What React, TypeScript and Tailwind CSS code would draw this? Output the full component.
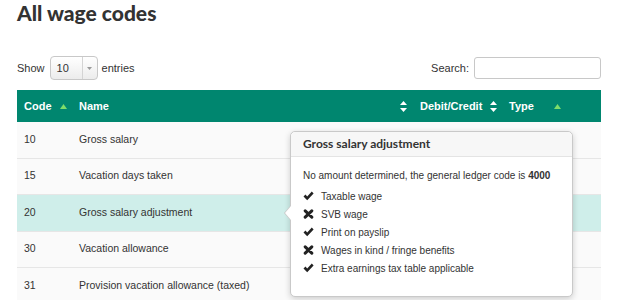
import React from "react";

type Row = { code: string; name: string; active?: boolean };

const rows: Row[] = [
  { code: "10", name: "Gross salary" },
  { code: "15", name: "Vacation days taken" },
  { code: "20", name: "Gross salary adjustment", active: true },
  { code: "30", name: "Vacation allowance" },
  { code: "31", name: "Provision vacation allowance (taxed)" },
];

const props: { ok: boolean; label: string }[] = [
  { ok: true, label: "Taxable wage" },
  { ok: false, label: "SVB wage" },
  { ok: true, label: "Print on payslip" },
  { ok: false, label: "Wages in kind / fringe benefits" },
  { ok: true, label: "Extra earnings tax table applicable" },
];

function SortBoth() {
  return (
    <svg width="7" height="11" viewBox="0 0 7 11" className="shrink-0">
      <path d="M3.5 0 L7 4 L0 4 Z" fill="#ffffff" />
      <path d="M3.5 11 L7 7 L0 7 Z" fill="#ffffff" />
    </svg>
  );
}

function SortUp() {
  return (
    <svg width="7" height="5" viewBox="0 0 7 5" className="shrink-0">
      <path d="M3.5 0 L7 5 L0 5 Z" fill="#7ddc6a" />
    </svg>
  );
}

function Check() {
  return (
    <svg width="11" height="10" viewBox="0 0 11 10">
      <path d="M0.5 5.5 L2.5 3.6 L4.2 5.6 L8.8 0.6 L10.6 2.4 L4.2 9.2 Z" fill="#222" />
    </svg>
  );
}

function Cross() {
  return (
    <svg width="11" height="10" viewBox="0 0 11 10">
      <path d="M2.2 1.8 L8.8 8.2 M8.8 1.8 L2.2 8.2" stroke="#222" strokeWidth="3" strokeLinecap="round" />
    </svg>
  );
}

export default function App() {
  return (
    <div className="relative w-[620px] h-[300px] overflow-hidden bg-white pl-[17px] pr-[19px] text-[#333] font-['Liberation_Sans',Arial,sans-serif]">
      <h1 className="pt-px text-[21px] leading-[24px] font-black font-['Lato',sans-serif] text-[#333]">
        All wage codes
      </h1>

      <div className="mt-[31px] flex h-[24px] items-center justify-between text-[11px]">
        <div className="flex items-center">
          <span>Show</span>
          <div className="ml-[5px] flex h-[24px] w-[48px] items-stretch rounded-[4px] border border-[#c8c8c8] bg-gradient-to-b from-white to-[#ececec]">
            <span className="flex flex-1 items-center pl-[6px] text-[11px]">10</span>
            <span className="flex w-[15px] items-center justify-center border-l border-[#d4d4d4]">
              <svg width="5" height="3" viewBox="0 0 5 3">
                <path d="M0 0 L5 0 L2.5 3 Z" fill="#999" />
              </svg>
            </span>
          </div>
          <span className="ml-[4px]">entries</span>
        </div>
        <div className="flex items-center">
          <span>Search:</span>
          <input
            className="ml-[5px] h-[22px] w-[127px] rounded-[3px] border border-[#c8c8c8] bg-white outline-none"
            readOnly
          />
        </div>
      </div>

      <div className="mt-[10px]">
        <div className="flex h-[32px] items-center bg-[#00866f] text-[11px] font-bold text-white">
          <div className="flex w-[55px] items-center pl-[7px] pr-[5px]">
            <span>Code</span>
            <span className="ml-auto"><SortUp /></span>
          </div>
          <div className="flex w-[340px] items-center pl-[7px] pr-[5px]">
            <span>Name</span>
            <span className="ml-auto"><SortBoth /></span>
          </div>
          <div className="flex w-[90px] items-center pl-[8px] pr-[5px]">
            <span>Debit/Credit</span>
            <span className="ml-auto"><SortBoth /></span>
          </div>
          <div className="flex flex-1 items-center pl-[7px]">
            <span>Type</span>
            <span className="ml-[20px]"><SortUp /></span>
          </div>
        </div>

        {rows.map((r) => (
          <div
            key={r.code}
            className={`flex h-[36.5px] items-center border-b border-[#e6e6e6] text-[10.5px] ${
              r.active ? "bg-[#cfeeea]" : "bg-[#fafafa]"
            }`}
          >
            <div className="w-[55px] pl-[7px]">{r.code}</div>
            <div className="flex-1 pl-[7px]">{r.name}</div>
          </div>
        ))}
      </div>

      <div className="absolute left-[290px] top-[131px] w-[283px] h-[166px] rounded-[5px] border border-[#c9c9c9] bg-white shadow-[0_2px_6px_rgba(0,0,0,0.18)]">
        <div className="absolute left-[-7px] top-[73px] h-0 w-0 border-y-[8px] border-r-[7px] border-y-transparent border-r-[#c9c9c9]" />
        <div className="absolute left-[-6px] top-[74px] h-0 w-0 border-y-[7px] border-r-[6px] border-y-transparent border-r-white" />
        <div className="flex h-[25px] items-center rounded-t-[5px] border-b border-[#e4e4e4] bg-[#f7f7f7] pl-[12px] text-[12px] font-bold font-['Lato',sans-serif] text-[#333]">
          Gross salary adjustment
        </div>
        <div className="px-[12px] pt-[12px] text-[10px] text-[#333]">
          <p className="leading-[14px]">
            No amount determined, the general ledger code is <b>4000</b>
          </p>
          <ul className="mt-[4px]">
            {props.map((p) => (
              <li key={p.label} className="flex h-[18px] items-center">
                <span className="flex w-[18px] items-center">{p.ok ? <Check /> : <Cross />}</span>
                <span>{p.label}</span>
              </li>
            ))}
          </ul>
        </div>
      </div>
    </div>
  );
}
